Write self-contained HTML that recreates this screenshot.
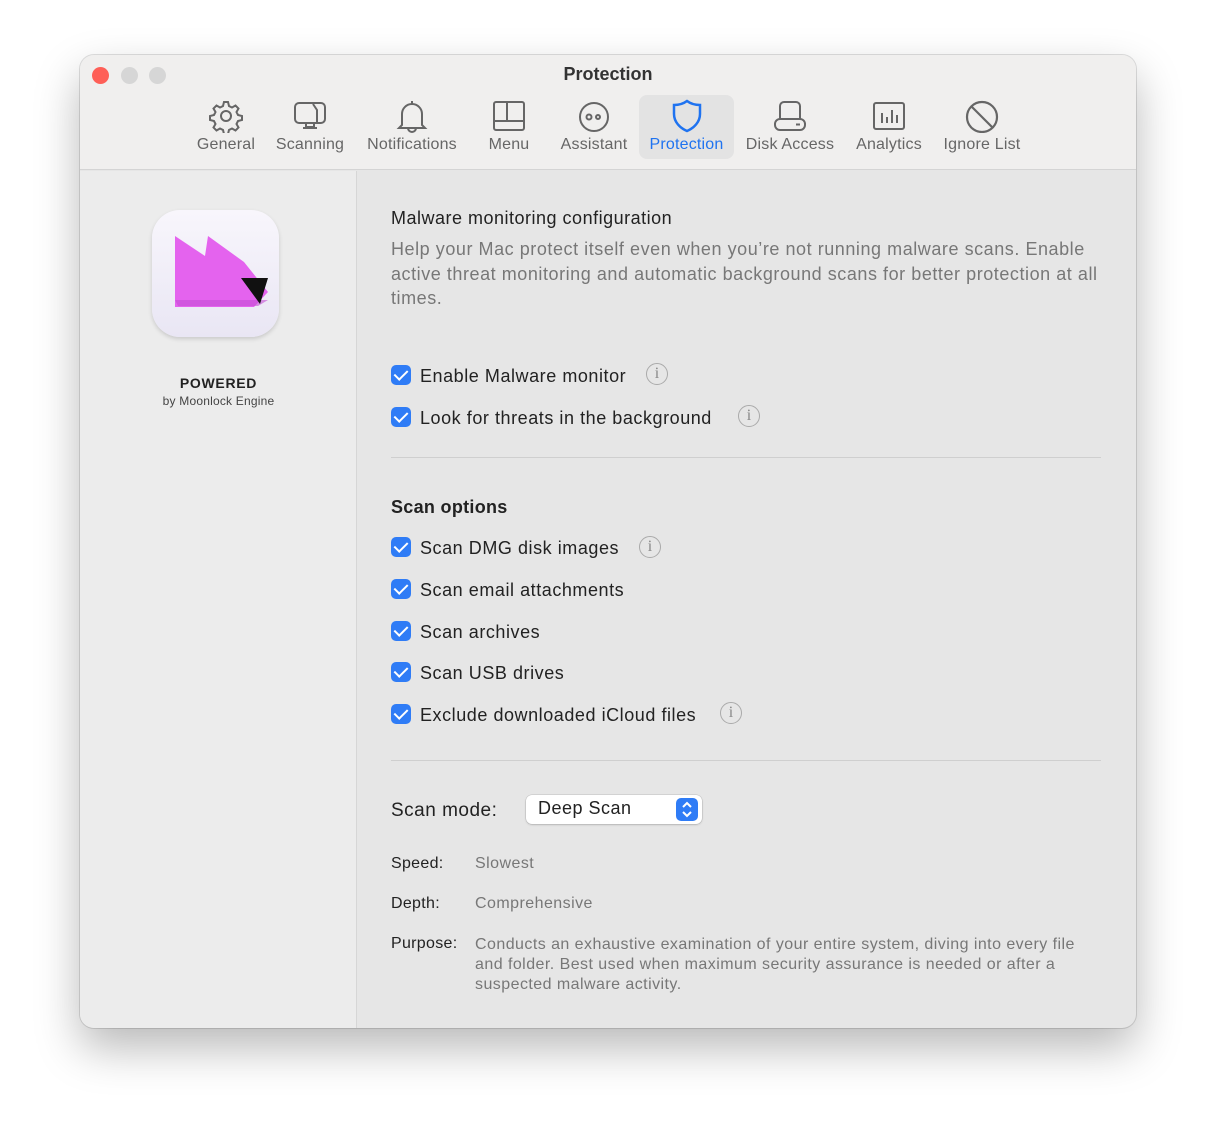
<!DOCTYPE html>
<html><head><meta charset="utf-8"><style>
*{margin:0;padding:0;box-sizing:border-box}
body{width:1216px;height:1135px;background:#fff;font-family:"Liberation Sans",sans-serif;position:relative;overflow:hidden}
.win{position:absolute;left:80px;top:55px;width:1056px;height:973px;border-radius:14px;overflow:hidden;background:#e6e6e6;box-shadow:0 20px 45px rgba(0,0,0,.28),0 0 0 1px rgba(0,0,0,.12)}
.tb{position:absolute;left:0;top:0;width:100%;height:115px;background:#f0efee;border-bottom:1px solid #d4d4d4}
.dot{position:absolute;top:12px;width:17px;height:17px;border-radius:50%}
.title{position:absolute;top:9px;left:0;width:100%;text-align:center;font-weight:bold;font-size:18px;color:#333}
.tab{position:absolute;top:40px;height:62px;text-align:center;font-size:16px;color:#666;letter-spacing:.2px}
.tab svg{display:block;margin:4px auto 0}
.tab span{display:block;margin-top:3px}
.side{position:absolute;left:0;top:116px;width:277px;height:857px;background:#ececec;border-right:1px solid #d6d6d6}
.abs{position:absolute;white-space:nowrap}
.t{font-size:18px;color:#222;letter-spacing:.55px}
.cb{position:absolute;width:20px;height:20px;border-radius:5px;background:#2f7cf6}
.cb:after{content:"";position:absolute;left:6px;top:2px;width:6px;height:11px;border:solid #fff;border-width:0 2.5px 2.5px 0;transform:rotate(45deg)}
.info{position:absolute;width:22px;height:22px;border-radius:50%;border:1.5px solid #aaa;color:#888;font-family:"Liberation Serif",serif;font-size:16px;text-align:center;line-height:19px}
.hr{position:absolute;left:311px;width:710px;height:1px;background:#cfcfcf}
.lbl{font-size:16px;color:#222;letter-spacing:.3px}
.val{font-size:16px;color:#777;letter-spacing:.45px}
</style></head><body>
<div class="win">
<div class="tb">
<div class="dot" style="left:12px;background:#fe5f57"></div>
<div class="dot" style="left:41px;background:#d6d6d6"></div>
<div class="dot" style="left:69px;background:#d6d6d6"></div>
<div class="title">Protection</div>
<div class="tab" style="left:112px;width:68px"><svg width="38" height="34" viewBox="0 0 38 34" fill="none" stroke="#666" stroke-width="2"><circle cx="19" cy="17" r="5"/><path d="M17 3h4l1 4 3 1.5 3.5-2 3 3-2 3.5 1.5 3 4 1v4l-4 1-1.5 3 2 3.5-3 3-3.5-2-3 1.5-1 4h-4l-1-4-3-1.5-3.5 2-3-3 2-3.5-1.5-3-4-1v-4l4-1 1.5-3-2-3.5 3-3 3.5 2 3-1.5z"/></svg><span>General</span></div>
<div class="tab" style="left:193px;width:74px"><svg width="38" height="34" viewBox="0 0 38 34" fill="none" stroke="#666" stroke-width="2"><rect x="4" y="4" width="30" height="20" rx="4"/><path d="M22 5l4 6v12M15 24v4h8v-4M12 29h14"/></svg><span>Scanning</span></div>
<div class="tab" style="left:283px;width:98px"><svg width="38" height="34" viewBox="0 0 38 34" fill="none" stroke="#666" stroke-width="2"><path d="M19 2v3M9 26V15a10 10 0 0 1 20 0v11l3 3H6zM15 29a4 4 0 0 0 8 0"/></svg><span>Notifications</span></div>
<div class="tab" style="left:405px;width:48px"><svg width="38" height="34" viewBox="0 0 38 34" fill="none" stroke="#666" stroke-width="2"><rect x="4" y="3" width="30" height="28" rx="2"/><path d="M4 22h30M17 3v19"/></svg><span>Menu</span></div>
<div class="tab" style="left:478px;width:72px"><svg width="38" height="34" viewBox="0 0 38 34" fill="none" stroke="#666" stroke-width="2"><circle cx="19" cy="18" r="14"/><circle cx="14" cy="18" r="2.5"/><circle cx="23" cy="18" r="2"/></svg><span>Assistant</span></div>
<div class="tab" style="left:559px;width:95px;top:40px;height:64px;background:#e3e3e3;border-radius:8px;color:#1f73f0"><svg width="38" height="34" viewBox="0 0 38 34" fill="none" stroke="#1f73f0" stroke-width="2.5"><path d="M19 2c4 3 9 4 13 4v9c0 8-6 14-13 17C12 29 6 23 6 15V6c4 0 9-1 13-4z"/></svg><span>Protection</span></div>
<div class="tab" style="left:662px;width:96px"><svg width="38" height="34" viewBox="0 0 38 34" fill="none" stroke="#666" stroke-width="2"><path d="M9 20V7a4 4 0 0 1 4-4h12a4 4 0 0 1 4 4v13"/><rect x="4" y="20" width="30" height="11" rx="5"/><path d="M25 25.5h4"/></svg><span>Disk Access</span></div>
<div class="tab" style="left:772px;width:74px"><svg width="38" height="34" viewBox="0 0 38 34" fill="none" stroke="#666" stroke-width="2"><rect x="4" y="4" width="30" height="26" rx="2"/><path d="M12 14v10M17 18v6M22 11v13M27 16v8"/></svg><span>Analytics</span></div>
<div class="tab" style="left:860px;width:84px"><svg width="38" height="34" viewBox="0 0 38 34" fill="none" stroke="#666" stroke-width="2.2"><circle cx="19" cy="18" r="15"/><path d="M8.5 7.5l21 21"/></svg><span>Ignore List</span></div>
</div>
<div class="side">
<div style="position:absolute;left:72px;top:39px;width:127px;height:127px;border-radius:28px;background:linear-gradient(#f8f6fc,#e9e6f4);box-shadow:0 2px 4px rgba(0,0,0,.15)">
<svg width="127" height="127" viewBox="0 0 127 127"><path d="M23 26l30 20 3-20 36 26 24 30-14 15H23z" fill="#e463ee"/><path d="M23 90h93l-10 6H26z" fill="#c44ed6" opacity=".6"/><path d="M89 68l27 0-8 26z" fill="#111"/></svg></div>
<div class="abs" style="left:0;width:277px;text-align:center;top:204px;font-size:14px;font-weight:bold;color:#222;letter-spacing:.7px">POWERED</div>
<div class="abs" style="left:0;width:277px;text-align:center;top:223px;font-size:12px;color:#444;letter-spacing:.2px">by Moonlock Engine</div>
</div>
<div class="abs t" style="left:311px;top:153px;letter-spacing:.5px">Malware monitoring configuration</div>
<div class="abs" style="left:311px;top:182px;font-size:18px;line-height:24.5px;color:#777;white-space:normal;width:715px;letter-spacing:.55px">Help your Mac protect itself even when you’re not running malware scans. Enable active threat monitoring and automatic background scans for better protection at all times.</div>
<div class="cb" style="left:311px;top:310px"></div><div class="abs t" style="left:340px;top:311px">Enable Malware monitor</div><div class="info" style="left:566px;top:308px">i</div>
<div class="cb" style="left:311px;top:352px"></div><div class="abs t" style="left:340px;top:353px">Look for threats in the background</div><div class="info" style="left:658px;top:350px">i</div>
<div class="hr" style="top:402px"></div>
<div class="abs t" style="left:311px;top:442px;font-weight:bold;letter-spacing:.3px">Scan options</div>
<div class="cb" style="left:311px;top:482px"></div><div class="abs t" style="left:340px;top:483px">Scan DMG disk images</div><div class="info" style="left:559px;top:481px">i</div>
<div class="cb" style="left:311px;top:524px"></div><div class="abs t" style="left:340px;top:525px">Scan email attachments</div>
<div class="cb" style="left:311px;top:566px"></div><div class="abs t" style="left:340px;top:567px">Scan archives</div>
<div class="cb" style="left:311px;top:607px"></div><div class="abs t" style="left:340px;top:608px">Scan USB drives</div>
<div class="cb" style="left:311px;top:649px"></div><div class="abs t" style="left:340px;top:650px">Exclude downloaded iCloud files</div><div class="info" style="left:640px;top:647px">i</div>
<div class="hr" style="top:705px"></div>
<div class="abs" style="left:311px;top:745px;font-size:19px;color:#222;letter-spacing:.5px">Scan mode:</div>
<div style="position:absolute;left:446px;top:740px;width:176px;height:29px;background:#fff;border-radius:6px;box-shadow:0 0 0 .5px rgba(0,0,0,.15),0 1px 2px rgba(0,0,0,.15)"><div class="abs" style="left:12px;top:3px;font-size:18px;color:#222;letter-spacing:.5px">Deep Scan</div><div style="position:absolute;right:4px;top:3px;width:22px;height:23px;border-radius:5px;background:#2f7cf6"><svg width="22" height="23" viewBox="0 0 22 23" fill="none" stroke="#fff" stroke-width="2"><path d="M7 9l4-4 4 4M7 14l4 4 4-4"/></svg></div></div>
<div class="abs lbl" style="left:311px;top:800px">Speed:</div><div class="abs val" style="left:395px;top:800px">Slowest</div>
<div class="abs lbl" style="left:311px;top:840px">Depth:</div><div class="abs val" style="left:395px;top:840px">Comprehensive</div>
<div class="abs lbl" style="left:311px;top:880px">Purpose:</div><div class="abs val" style="left:395px;top:880px;white-space:normal;width:610px;line-height:20px">Conducts an exhaustive examination of your entire system, diving into every file and folder. Best used when maximum security assurance is needed or after a suspected malware activity.</div>
</div>
</body></html>
